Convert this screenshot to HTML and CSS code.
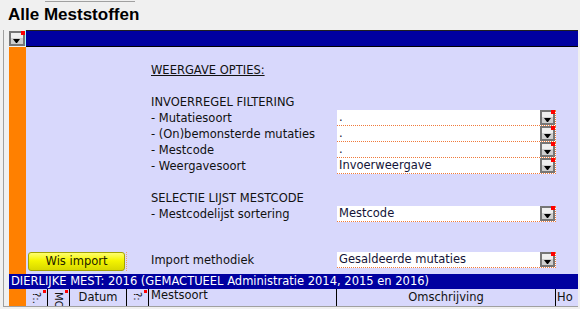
FILE: index.html
```html
<!DOCTYPE html>
<html>
<head>
<meta charset="utf-8">
<title>Alle Meststoffen</title>
<link rel="stylesheet" href="styles.css">
</head>
<body>
<div class="masthead">
  <div class="topline"></div>
  <h1 class="title">Alle Meststoffen</h1>
</div>
<div class="frame">
  <div class="sheet">
    <div class="toolbar">
      <div class="corner"><span class="ddb"></span></div>
      <div class="toolbar-fill"></div>
    </div>
    <div class="content">
      <div class="gutter"></div>
      <div class="panel">
        <div class="row"><span></span><span class="label u">WEERGAVE OPTIES:</span></div>
        <div class="row"></div>
        <div class="row"><span></span><span class="label">INVOERREGEL FILTERING</span></div>
        <div class="row"><span></span><span class="label">- Mutatiesoort</span><div class="dd"><span class="dd-val">.</span><span class="ddb"></span></div></div>
        <div class="row"><span></span><span class="label">- (On)bemonsterde mutaties</span><div class="dd"><span class="dd-val">.</span><span class="ddb"></span></div></div>
        <div class="row"><span></span><span class="label">- Mestcode</span><div class="dd"><span class="dd-val">.</span><span class="ddb"></span></div></div>
        <div class="row"><span></span><span class="label">- Weergavesoort</span><div class="dd"><span class="dd-val">Invoerweergave</span><span class="ddb"></span></div></div>
        <div class="row"></div>
        <div class="row"><span></span><span class="label">SELECTIE LIJST MESTCODE</span></div>
        <div class="row"><span></span><span class="label">- Mestcodelijst sortering</span><div class="dd"><span class="dd-val">Mestcode</span><span class="ddb"></span></div></div>
        <div class="row"></div>
        <div class="row short"></div>
        <div class="row"><div class="btn-cell"><button class="wis">Wis import</button></div><span class="label">Import methodiek</span><div class="dd"><span class="dd-val">Gesaldeerde mutaties</span><span class="ddb"></span></div></div>
      </div>
    </div>
    <div class="banner">DIERLIJKE MEST: 2016 (GEMACTUEEL Administratie 2014, 2015 en 2016)</div>
    <div class="hdr">
      <div class="gutter"></div>
      <div class="hc w22 note"><span class="rot">?:.</span></div>
      <div class="hc w22 note"><span class="rot">MO</span></div>
      <div class="hc w57 center">Datum</div>
      <div class="hc w22 note"><span class="rot">?:</span></div>
      <div class="hc w188 top">Mestsoort</div>
      <div class="hc w219 center">Omschrijving</div>
      <div class="hc last">Ho</div>
    </div>
  </div>
</div>
</body>
</html>
```
FILE: styles.css
```css
html, body {
  margin: 0;
  padding: 0;
}
body {
  width: 580px;
  height: 309px;
  overflow: hidden;
  background: #f0f0f0;
  font-family: "DejaVu Sans", Verdana, sans-serif;
  font-size: 11.5px;
  color: #000;
}
.masthead {
  height: 29px;
}
.topline {
  margin: 1px 0 0 45px;
  width: 90px;
  height: 1px;
  background: #a0a0a0;
}
.title {
  margin: 0;
  padding: 0 0 2px 8px;
  height: 25px;
  line-height: 25px;
  font-family: "Liberation Sans", Arial, sans-serif;
  font-size: 17px;
  font-weight: bold;
  color: #000;
}
.frame {
  margin-left: 3px;
  padding-left: 5px;
  border-left: 1px solid #a0a0a0;
  border-bottom: 1px solid #a0a0a0;
  width: 569px;
}
.sheet {
  width: 569px;
}
.toolbar {
  display: flex;
  height: 17px;
}
.corner {
  width: 17px;
  height: 16px;
  padding-top: 1px;
  box-sizing: border-box;
  border-right: 1px solid #a8ffff;
  background: #f0f0f0;
}
.corner .ddb {
  width: 16px;
  height: 15px;
}
.toolbar-fill {
  flex: 1;
  border-top: 1px solid #202020;
  border-bottom: 1px solid #000;
  background: #0000a0;
}
.content {
  display: flex;
  height: 227px;
}
.gutter {
  width: 17px;
  flex: none;
  background: #ff8000;
}
.panel {
  flex: 1;
  background: #d8d8fc;
  padding-top: 15px;
}
.row {
  display: grid;
  grid-template-columns: 123px 188px 219px 1fr;
  height: 16px;
  line-height: 16px;
}
.row.short {
  height: 14px;
}
.label {
  padding-left: 2px;
  white-space: nowrap;
  color: #111;
}
.u {
  text-decoration: underline;
}
.dd {
  display: flex;
  height: 16px;
  box-sizing: border-box;
  background: #fff;
  border-bottom: 1px dotted #f07a3a;
  border-right: 1px dotted #f07a3a;
}
.dd-val {
  flex: 1;
  padding-left: 2px;
  line-height: 15px;
  color: #141438;
  white-space: nowrap;
  overflow: hidden;
}
.ddb {
  display: block;
  position: relative;
  flex: none;
  width: 15px;
  height: 15px;
  box-sizing: border-box;
  border: 2px solid #767676;
  background: linear-gradient(#efefef 0, #efefef 45%, #cfcfcf 45%, #cfcfcf 100%);
}
.ddb::before {
  content: "";
  position: absolute;
  left: 2px;
  top: 6px;
  width: 1px;
  height: 0;
  border-left: 3px solid transparent;
  border-right: 3px solid transparent;
  border-top: 4px solid #000;
}
.ddb::after {
  content: "";
  position: absolute;
  top: -2px;
  right: -2px;
  width: 4px;
  height: 4px;
  background: #ff0000;
}
.btn-cell {
  border-right: 1px dotted #f0a070;
  margin-right: 22px;
  height: 19px;
}
.wis {
  display: block;
  margin: 0 0 0 2px;
  padding: 0;
  width: 97px;
  height: 19px;
  box-sizing: border-box;
  border: 1px solid #a4a400;
  border-radius: 3px;
  background: linear-gradient(#ffff70 0%, #f4f400 45%, #d8d800 100%);
  font-family: "DejaVu Sans", Verdana, sans-serif;
  font-size: 11.5px;
  line-height: 17px;
  color: #222200;
  text-align: center;
}
.banner {
  height: 15px;
  line-height: 15px;
  padding-left: 2px;
  background: #0000a0;
  color: #fff;
  white-space: nowrap;
  overflow: hidden;
}
.hdr {
  display: flex;
  height: 17px;
  overflow: hidden;
}
.hc {
  position: relative;
  flex: none;
  box-sizing: border-box;
  height: 17px;
  border-right: 1px solid #000;
  background: #d8d8fc;
  line-height: 17px;
  white-space: nowrap;
  overflow: hidden;
  color: #111;
}
.w22 { width: 22px; }
.w57 { width: 57px; }
.w188 { width: 188px; padding-left: 2px; }
.w219 { width: 219px; }
.center { text-align: center; }
.top { line-height: 13px; }
.last {
  flex: 1;
  border-right: none;
  padding-left: 1px;
}
.note::after {
  content: "";
  position: absolute;
  top: 1px;
  right: 1px;
  width: 3px;
  height: 3px;
  background: #ff0000;
}
.rot {
  display: block;
  writing-mode: vertical-rl;
  margin: 3px 0 0 5px;
  font-size: 10px;
  line-height: 11px;
}
```
